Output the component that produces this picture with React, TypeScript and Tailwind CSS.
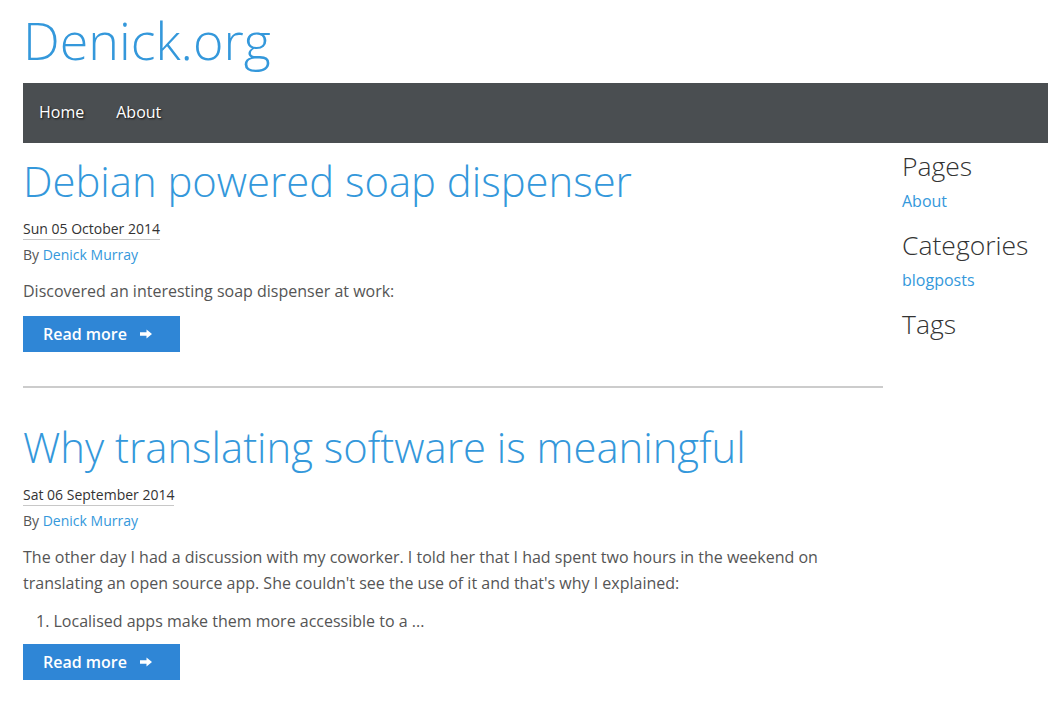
const posts = [
  {
    title: 'Debian powered soap dispenser',
    date: 'Sun 05 October 2014',
    body: ['Discovered an interesting soap dispenser at work:'],
    list: [] as string[],
  },
  {
    title: 'Why translating software is meaningful',
    date: 'Sat 06 September 2014',
    body: [
      "The other day I had a discussion with my coworker. I told her that I had spent two hours in the weekend on translating an open source app. She couldn't see the use of it and that's why I explained:",
    ],
    list: ['Localised apps make them more accessible to a ...'],
  },
];

function Arrow() {
  return (
    <svg width="12" height="10" viewBox="0 0 12 10" className="ml-[13px]">
      <path d="M0 3.2h6.5V0.5L12 5l-5.5 4.5V6.8H0z" fill="white" />
    </svg>
  );
}

function Post({ post, last }: { post: (typeof posts)[number]; last: boolean }) {
  return (
    <article className={last ? 'pt-[33px]' : 'pt-[12px] pb-[34px] border-b-2 border-[#cccccc]'}>
      <h2 className="text-[41.8px] leading-[52px] font-light text-[#3498db]">{post.title}</h2>
      <div className="mt-[12px] text-[14px] leading-[19px]">
        <span className="text-[#333] border-b border-[#c8c8c8] pb-[1px]">{post.date}</span>
      </div>
      <div className="mt-[7px] text-[14px] leading-[19px] text-[#555]">
        By <a className="text-[#3498db]">Denick Murray</a>
      </div>
      {post.body.map((p) => (
        <p key={p} className="mt-[14px] text-[16px] leading-[26px] text-[#555]">{p}</p>
      ))}
      {post.list.length > 0 && (
        <ol className="mt-[12px] pl-[13px] list-decimal list-inside text-[16px] leading-[26px] text-[#555]">
          {post.list.map((l) => (
            <li key={l}>{l}</li>
          ))}
        </ol>
      )}
      <button
        className={
          (post.list.length > 0 ? 'mt-[10px]' : 'mt-[12px]') +
          ' flex items-center h-[36px] w-[157px] pl-[20px] bg-[#2f86d6] text-white text-[16px] font-semibold'
        }
      >
        Read more
        <Arrow />
      </button>
    </article>
  );
}

export default function App() {
  return (
    <div className="min-h-screen bg-white pl-[23px] font-['Open_Sans',sans-serif]">
      <header>
        <h1 className="pt-[4px] h-[83px] text-[52px] leading-[72px] font-light text-[#3498db]">Denick.org</h1>
        <nav className="h-[60px] bg-[#4a4e51] flex items-center pl-[16px] gap-[32px] text-[16px] text-white [text-shadow:1px_1px_2px_rgba(0,0,0,0.8)]">
          <a className="-mt-[2px]">Home</a>
          <a className="-mt-[2px]">About</a>
        </nav>
      </header>
      <div className="flex gap-[19px]">
        <main className="w-[860px] shrink-0">
          {posts.map((p, i) => (
            <Post key={p.title} post={p} last={i === posts.length - 1} />
          ))}
        </main>
        <aside className="pt-[6px] text-[#333]">
          <h3 className="text-[26.5px] leading-[34px] font-light">Pages</h3>
          <a className="block text-[16px] leading-[24px] text-[#3498db] mt-[6px]">About</a>
          <h3 className="mt-[15px] text-[26.5px] leading-[34px] font-light">Categories</h3>
          <a className="block text-[16px] leading-[24px] text-[#3498db] mt-[6px]">blogposts</a>
          <h3 className="mt-[15px] text-[26.5px] leading-[34px] font-light">Tags</h3>
        </aside>
      </div>
    </div>
  );
}
